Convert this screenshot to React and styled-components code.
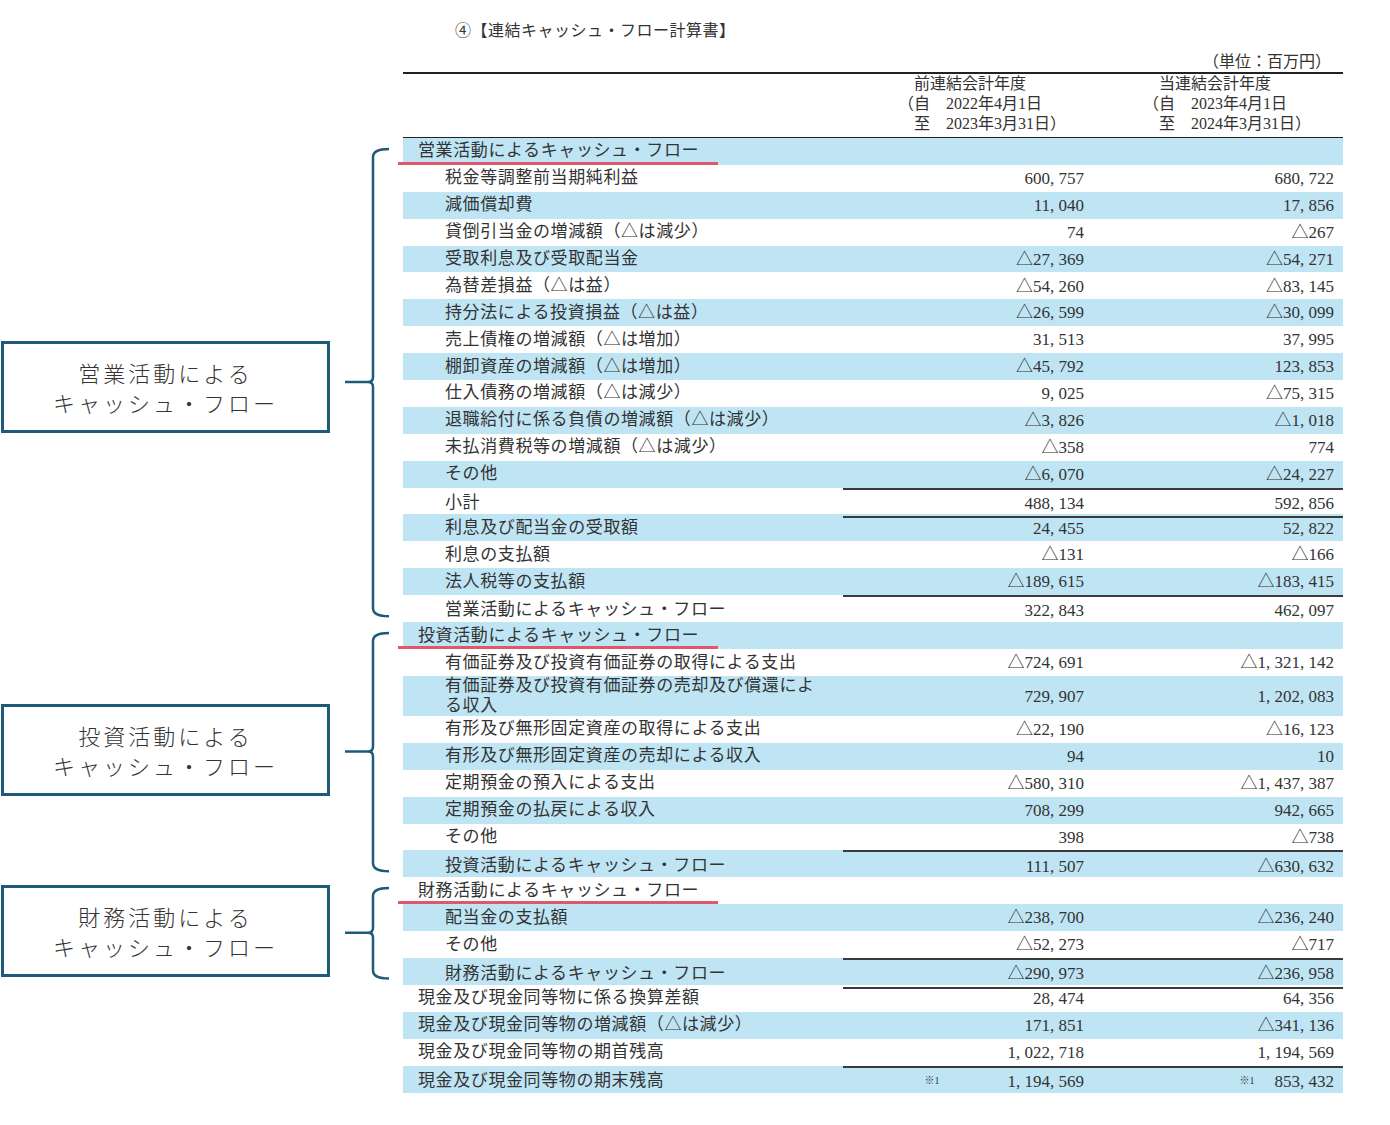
import styled, { createGlobalStyle } from 'styled-components';

const Global = createGlobalStyle`
  body { margin: 0; background: #fff; }
`;

const ROW_H = 26.9;

const Page = styled.div`
  width: 1390px;
  padding-top: 18px;
  font-family: 'Liberation Serif', 'Noto Sans CJK JP', serif;
  color: #333;
`;
const TopBlock = styled.div`
  margin-left: 403px;
  width: 940px;
`;
const Title = styled.div`
  padding-left: 52px;
  font-size: 16px;
  height: 26px;
  line-height: 26px;
  letter-spacing: 0.5px;
`;
const Unit = styled.div`
  text-align: right;
  padding-right: 12px;
  margin-top: 8px;
  font-size: 16px;
  line-height: 20px;
`;
const HeadRow = styled.div`
  display: grid;
  grid-template-columns: 440px 250px 250px;
  border-top: 2px solid #222;
  border-bottom: 1.5px solid #222;
  height: 63px;
`;
const HeadCell = styled.div`
  font-size: 16px;
  line-height: 20px;
  padding-left: ${(p) => p.$pad}px;
  white-space: pre;
`;
const Group = styled.div`
  display: flex;
`;
const Note = styled.div`
  width: 403px;
  display: flex;
  align-items: center;
`;
const Box = styled.div`
  margin-left: 1px;
  margin-top: ${(p) => p.$shift}px;
  width: 323px;
  height: 86px;
  border: 3px solid #1e5b78;
  display: flex;
  flex-direction: column;
  align-items: center;
  justify-content: center;
  gap: 2px;
  font-family: 'Noto Sans CJK JP', sans-serif;
  font-weight: 300;
  font-size: 22px;
  line-height: 28px;
  letter-spacing: 3px;
  color: #333;
`;
const Rows = styled.div`
  width: 940px;
  margin-left: ${(p) => (p.$indent ? 0 : 403)}px;
`;
const Row = styled.div`
  display: grid;
  grid-template-columns: 440px 250px 250px;
  height: ${(p) => (p.$tall ? 40 : ROW_H)}px;
  background: ${(p) => (p.$blue ? '#bfe5f5' : '#fff')};
  font-size: 17px;
  letter-spacing: 0.6px;
  align-items: center;
`;
const Label = styled.div`
  position: relative;
  padding-left: ${(p) => (p.$level === 1 ? 42 : 15)}px;
  line-height: 20px;
  white-space: nowrap;
  align-self: stretch;
  display: flex;
  align-items: center;
  &::after {
    content: '';
    display: ${(p) => (p.$mark ? 'block' : 'none')};
    position: absolute;
    left: -5px;
    bottom: 0;
    width: 320px;
    height: 3px;
    background: #e0566b;
  }
`;
const Num = styled.div`
  height: 100%;
  text-align: right;
  line-height: ${(p) => (p.$tall ? 40 : ROW_H)}px;
  padding-right: 9px;
  letter-spacing: 0;
  white-space: nowrap;
  border-top: ${(p) => (p.$top ? '2px solid #3a3a3a' : '0')};
  border-bottom: ${(p) => (p.$bot ? '2px solid #3a3a3a' : '0')};
  box-sizing: border-box;
  & > span.v { display: inline-block; line-height: 20px; vertical-align: middle; }
`;
const Ref = styled.span`
  font-size: 10px;
  vertical-align: middle;
  margin-right: ${(p) => p.$gap}px;
`;

const op = [
  ['営業活動によるキャッシュ・フロー', '', '', 0, 'mark'],
  ['税金等調整前当期純利益', '600, 757', '680, 722'],
  ['減価償却費', '11, 040', '17, 856'],
  ['貸倒引当金の増減額（△は減少）', '74', '△267'],
  ['受取利息及び受取配当金', '△27, 369', '△54, 271'],
  ['為替差損益（△は益）', '△54, 260', '△83, 145'],
  ['持分法による投資損益（△は益）', '△26, 599', '△30, 099'],
  ['売上債権の増減額（△は増加）', '31, 513', '37, 995'],
  ['棚卸資産の増減額（△は増加）', '△45, 792', '123, 853'],
  ['仕入債務の増減額（△は減少）', '9, 025', '△75, 315'],
  ['退職給付に係る負債の増減額（△は減少）', '△3, 826', '△1, 018'],
  ['未払消費税等の増減額（△は減少）', '△358', '774'],
  ['その他', '△6, 070', '△24, 227'],
  ['小計', '488, 134', '592, 856', 1, 'both'],
  ['利息及び配当金の受取額', '24, 455', '52, 822'],
  ['利息の支払額', '△131', '△166'],
  ['法人税等の支払額', '△189, 615', '△183, 415'],
  ['営業活動によるキャッシュ・フロー', '322, 843', '462, 097', 1, 'top'],
];
const inv = [
  ['投資活動によるキャッシュ・フロー', '', '', 0, 'mark'],
  ['有価証券及び投資有価証券の取得による支出', '△724, 691', '△1, 321, 142'],
  ['有価証券及び投資有価証券の売却及び償還によ\nる収入', '729, 907', '1, 202, 083', 1, 'tall'],
  ['有形及び無形固定資産の取得による支出', '△22, 190', '△16, 123'],
  ['有形及び無形固定資産の売却による収入', '94', '10'],
  ['定期預金の預入による支出', '△580, 310', '△1, 437, 387'],
  ['定期預金の払戻による収入', '708, 299', '942, 665'],
  ['その他', '398', '△738'],
  ['投資活動によるキャッシュ・フロー', '111, 507', '△630, 632', 1, 'both'],
];
const fin = [
  ['財務活動によるキャッシュ・フロー', '', '', 0, 'mark'],
  ['配当金の支払額', '△238, 700', '△236, 240'],
  ['その他', '△52, 273', '△717'],
  ['財務活動によるキャッシュ・フロー', '△290, 973', '△236, 958', 1, 'both'],
];
const tail = [
  ['現金及び現金同等物に係る換算差額', '28, 474', '64, 356', 0],
  ['現金及び現金同等物の増減額（△は減少）', '171, 851', '△341, 136', 0],
  ['現金及び現金同等物の期首残高', '1, 022, 718', '1, 194, 569', 0],
  ['現金及び現金同等物の期末残高', '1, 194, 569', '853, 432', 0, 'both', true],
];

const Brace = ({ h }) => {
  const t = 11;
  const b = h - 6;
  const m = h / 2 + 2;
  return (
    <svg width="60" height={h} style={{ marginLeft: 'auto', display: 'block' }}>
      <path
        d={`M46 ${t} Q30 ${t} 30 ${t + 8} L30 ${m - 5} Q30 ${m} 25 ${m} Q30 ${m} 30 ${m + 5} L30 ${b - 8} Q30 ${b} 46 ${b} M2 ${m} L26 ${m}`}
        fill="none"
        stroke="#1e5b78"
        strokeWidth="2.5"
      />
    </svg>
  );
};

const renderRows = (rows, start) =>
  rows.map(([label, a, b, level = 1, flag, ref], i) => {
    const blue = (start + i) % 2 === 0;
    const tall = flag === 'tall';
    const top = flag === 'top' || flag === 'both';
    const bot = flag === 'both';
    return (
      <Row key={start + i} $blue={blue} $tall={tall}>
        <Label $level={level} $mark={flag === 'mark'}>
          {tall ? <span style={{ whiteSpace: 'pre' }}>{label}</span> : label}
        </Label>
        <Num $top={top} $bot={bot} $tall={tall}>
          {ref && <Ref $gap={68}>※1</Ref>}
          <span className="v">{a}</span>
        </Num>
        <Num $top={top} $bot={bot} $tall={tall}>
          {ref && <Ref $gap={20}>※1</Ref>}
          <span className="v">{b}</span>
        </Num>
      </Row>
    );
  });

const groupHeight = (rows) =>
  rows.reduce((s, r) => s + (r[4] === 'tall' ? 40 : ROW_H), 0);

const Section = ({ rows, lines, start, shift = 0 }) => (
  <Group>
    <Note>
      <Box $shift={shift}>
        {lines.map((l) => (
          <div key={l}>{l}</div>
        ))}
      </Box>
      <Brace h={groupHeight(rows)} />
    </Note>
    <Rows $indent>{renderRows(rows, start)}</Rows>
  </Group>
);

export default function App() {
  const s2 = op.length;
  const s3 = s2 + inv.length;
  const s4 = s3 + fin.length;
  return (
    <Page>
      <Global />
      <TopBlock>
        <Title>④【連結キャッシュ・フロー計算書】</Title>
        <Unit>（単位：百万円）</Unit>
        <HeadRow>
          <div />
          <HeadCell $pad={55}>{'　前連結会計年度\n（自　2022年4月1日\n　至　2023年3月31日）'}</HeadCell>
          <HeadCell $pad={50}>{'　当連結会計年度\n（自　2023年4月1日\n　至　2024年3月31日）'}</HeadCell>
        </HeadRow>
      </TopBlock>
      <Section rows={op} start={0} shift={14} lines={['営業活動による', 'キャッシュ・フロー']} />
      <Section rows={inv} start={s2} lines={['投資活動による', 'キャッシュ・フロー']} />
      <Section rows={fin} start={s3} lines={['財務活動による', 'キャッシュ・フロー']} />
      <Rows>{renderRows(tail, s4)}</Rows>
    </Page>
  );
}
